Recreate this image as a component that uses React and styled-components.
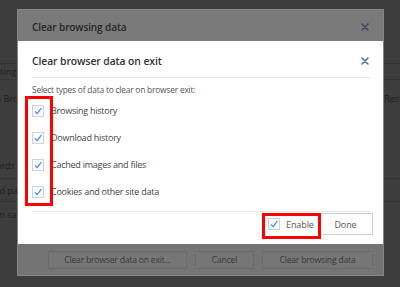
import React from 'react';
import styled, { createGlobalStyle } from 'styled-components';

const GlobalStyle = createGlobalStyle`
  html, body {
    margin: 0;
    padding: 0;
  }
  body {
    background: #3d3d3d;
    font-family: "Open Sans", "Noto Sans", "DejaVu Sans", sans-serif;
  }
`;

const Screen = styled.div`
  position: relative;
  width: 400px;
  height: 287px;
  overflow: hidden;
  background: #3d3d3d;
`;

// the settings page behind the dimmed dialogs
const Backdrop = styled.div`
  display: flex;
  flex-direction: column;
  padding-top: 63px;
`;

const BgRow = styled.div`
  display: flex;
  justify-content: space-between;
  align-items: center;
  height: ${p => p.h}px;
  border-top: ${p => (p.lined ? '1px solid #333' : 'none')};
  border-bottom: ${p => (p.lined ? '1px solid #333' : 'none')};
  margin-top: ${p => p.gap || 0}px;
`;

const BgText = styled.span`
  font-size: 9px;
  color: #1f1f1f;
  white-space: nowrap;
  margin-left: ${p => p.indent || 0}px;
  margin-right: ${p => p.outdent || 0}px;
`;

const Dialog = styled.div`
  position: absolute;
  top: 10px;
  left: 18px;
  width: 365px;
  height: 265px;
  display: flex;
  flex-direction: column;
  background: #777;
  box-shadow: 0 0 0 1px #858585;
`;

const DialogHeader = styled.div`
  height: 31px;
  display: flex;
  align-items: center;
  justify-content: space-between;
  padding: 2px 14px 0 14px;
  box-sizing: border-box;
  background: #7a7a7a;
`;

const Title = styled.div`
  font-size: ${p => (p.small ? 10 : 10.4)}px;
  font-weight: 600;
  letter-spacing: -0.1px;
  color: ${p => (p.dim ? '#262626' : '#333')};
  white-space: nowrap;
`;

const CloseIcon = ({ color }) => (
  <svg width="8" height="8" viewBox="0 0 8 8">
    <path d="M1 1 L7 7 M7 1 L1 7" stroke={color} strokeWidth="1.5" strokeLinecap="round" />
  </svg>
);

const Modal = styled.div`
  position: relative;
  flex: 1;
  background: #fff;
  padding: 0 13px 0 14px;
  display: flex;
  flex-direction: column;
`;

const ModalHeader = styled.div`
  height: 37px;
  display: flex;
  align-items: center;
  justify-content: space-between;
  padding: 3px 1px 0 0;
  box-sizing: border-box;
  border-bottom: 1px solid #e8e8ef;
`;

const Hint = styled.div`
  margin-top: 6px;
  font-size: 8.4px;
  letter-spacing: -0.2px;
  line-height: 12px;
  color: #555;
  white-space: nowrap;
`;

const OptionList = styled.div`
  display: flex;
  flex-direction: column;
  margin-top: 1px;
`;

const Option = styled.label`
  height: 27px;
  display: flex;
  align-items: center;
  gap: 7px;
  font-size: 9px;
  letter-spacing: -0.25px;
  color: #444;
  white-space: nowrap;
`;

const Box = styled.span`
  width: 12px;
  height: 12px;
  box-sizing: border-box;
  border: 1px solid #cfd2da;
  background: #fafbfd;
  display: flex;
  align-items: center;
  justify-content: center;
  flex: none;
`;

const Check = () => (
  <Box>
    <svg width="10" height="10" viewBox="0 0 10 10">
      <path d="M2 5.4 L4 7.6 L8.4 2.2" fill="none" stroke="#3a8be6" strokeWidth="1.2" />
    </svg>
  </Box>
);

const Divider = styled.div`
  margin-top: 6px;
  height: 1px;
  background: #e8e8ef;
`;

const ModalFooter = styled.div`
  display: flex;
  justify-content: flex-end;
  align-items: center;
  margin-right: -3px;
  padding-top: 1px;
`;

const Button = styled.div`
  height: 22px;
  box-sizing: border-box;
  width: ${p => p.w}px;
  display: flex;
  align-items: center;
  justify-content: ${p => (p.plain ? 'flex-start' : 'center')};
  padding-left: ${p => (p.plain ? 4 : 0)}px;
  gap: 6px;
  border: 1px solid ${p => (p.plain ? 'transparent' : '#cfcfcf')};
  font-size: 9px;
  letter-spacing: -0.1px;
  color: #555;
  background: #fff;
`;

const DialogFooter = styled.div`
  height: 31px;
  display: flex;
  justify-content: flex-end;
  align-items: center;
  gap: 8px;
  padding-right: 10px;
  box-sizing: border-box;
  background: #747474;
`;

const DimButton = styled.div`
  height: 18px;
  width: ${p => p.w}px;
  box-sizing: border-box;
  border: 1px solid #6a6a6a;
  background: #767676;
  display: flex;
  align-items: center;
  justify-content: center;
  font-size: 8.6px;
  letter-spacing: -0.2px;
  color: #3a3a3a;
  white-space: nowrap;
`;

// red annotation frames drawn over the screenshot
const Highlight = styled.div`
  position: absolute;
  left: ${p => p.x}px;
  top: ${p => p.y}px;
  width: ${p => p.w}px;
  height: ${p => p.h}px;
  box-sizing: border-box;
  border: 3px solid #ff0000;
  pointer-events: none;
`;

const options = [
  'Browsing history',
  'Download history',
  'Cached images and files',
  'Cookies and other site data',
];

export default function App() {
  return (
    <Screen>
      <GlobalStyle />
      <Backdrop>
        <BgRow h={15} lined>
          <BgText indent={-13}>Settings</BgText>
        </BgRow>
        <BgRow h={36}>
          <BgText indent={-22}>Open Browser Extensions</BgText>
          <BgText outdent={-14}>Restart</BgText>
        </BgRow>
        <BgRow h={26} gap={36}>
          <BgText indent={-30}>Passwords</BgText>
        </BgRow>
        <BgRow h={22} lined>
          <BgText indent={-20}>Saved passwords</BgText>
        </BgRow>
        <BgRow h={24}>
          <BgText indent={-28}>Offer to save passwords</BgText>
        </BgRow>
      </Backdrop>

      <Dialog>
        <DialogHeader>
          <Title dim small>Clear browsing data</Title>
          <CloseIcon color="#3c4659" />
        </DialogHeader>

        <Modal>
          <ModalHeader>
            <Title>Clear browser data on exit</Title>
            <CloseIcon color="#56698e" />
          </ModalHeader>
          <Hint>Select types of data to clear on browser exit:</Hint>
          <OptionList>
            {options.map(o => (
              <Option key={o}>
                <Check />
                {o}
              </Option>
            ))}
          </OptionList>
          <Divider />
          <ModalFooter>
            <Button w={55} plain>
              <Check />
              Enable
            </Button>
            <Button w={55}>Done</Button>
          </ModalFooter>
          <Highlight x={7} y={55} w={28} h={110} />
          <Highlight x={244} y={172} w={59} h={26} />
        </Modal>

        <DialogFooter>
          <DimButton w={139}>Clear browser data on exit...</DimButton>
          <DimButton w={59}>Cancel</DimButton>
          <DimButton w={111}>Clear browsing data</DimButton>
        </DialogFooter>
      </Dialog>
    </Screen>
  );
}
